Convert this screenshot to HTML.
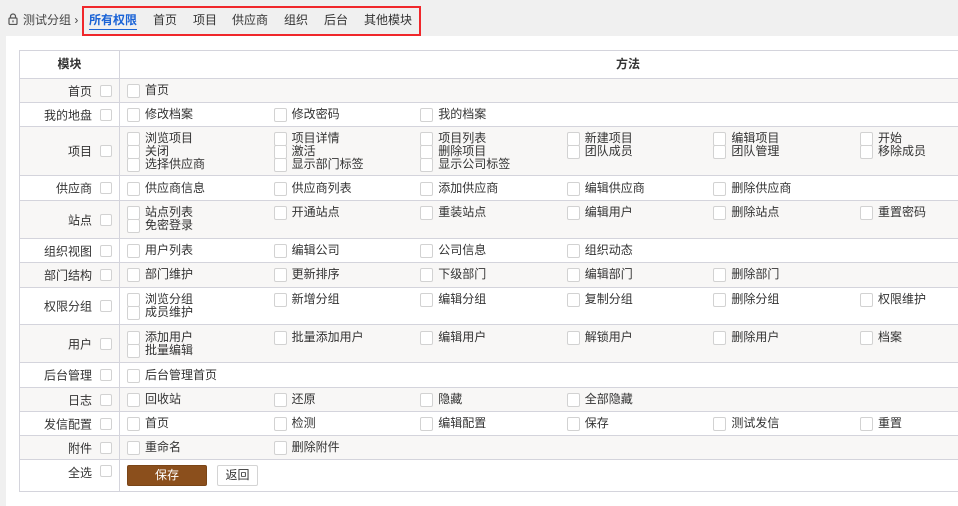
<!DOCTYPE html>
<html><head><meta charset="utf-8"><style>
*{box-sizing:border-box;margin:0;padding:0}
body{width:958px;height:499px;overflow:hidden;background:#f0f0f0;font-family:"Liberation Sans","Noto Sans CJK SC",sans-serif;font-size:12px;color:#333;position:relative}
.top{position:absolute;left:0;top:0;height:36px;width:958px}
.lock{position:absolute;left:8px;top:13px}
.crumb{position:absolute;left:23px;top:11px;font-size:12px;color:#444}
.redbox{position:absolute;left:82px;top:6px;width:339px;height:30px;border:2px solid #f0272b}
.nav{position:absolute;top:11px;font-size:12px;color:#333}
.nav.act{color:#1a63d6;font-weight:bold;border-bottom:1px solid #1a63d6;padding-bottom:1px}
.panel{position:absolute;left:6px;top:36px;width:960px;height:470px;background:#fff}
.tbl{position:absolute;left:19px;top:50px;width:1117px;border-left:1px solid #d4d4dc;border-top:1px solid #d4d4dc}
.row{position:relative;border-bottom:1px solid #d4d4dc;display:flex}
.row.alt{background:#f8f7f6}
.lc{width:100px;border-right:1px solid #d4d4dc;position:relative;flex:none}
.lc span{position:absolute;right:27px;top:50%;transform:translateY(-50%);white-space:nowrap}
.lc i{position:absolute;left:80px;top:50%;transform:translateY(-50%);width:12px;height:12px;border:1px solid #d2d2d2;border-radius:2px;background:#fff}
.rc{flex:1;padding-left:7px;display:flex;flex-wrap:wrap;align-content:flex-start}
.it{width:146.6px;height:13px;line-height:13px;white-space:nowrap;position:relative;padding-left:18px;flex:none}
.it::before{content:"";position:absolute;left:0;top:0;width:11px;height:12px;border:1px solid #d2d2d2;border-radius:2px;background:#fff}
.hd{font-weight:bold;height:28px;line-height:27px}
.btn{position:absolute;top:465px;height:21px;line-height:19px;text-align:center;border-radius:2px}
</style></head><body>
<div class="top">
<svg class="lock" width="10" height="12" viewBox="0 0 10 12"><path d="M2.5 5V3.5a2.5 2.5 0 0 1 5 0V5" fill="none" stroke="#555" stroke-width="1.2"/><rect x="1" y="5" width="8" height="6.5" rx="1" fill="none" stroke="#555" stroke-width="1.2"/><rect x="4.4" y="7.3" width="1.2" height="2" fill="#555"/></svg>
<div class="crumb">测试分组 ›</div>
<div class="redbox"></div>
<div class="nav act" style="left:89px">所有权限</div>
<div class="nav" style="left:153px">首页</div>
<div class="nav" style="left:193px">项目</div>
<div class="nav" style="left:232px">供应商</div>
<div class="nav" style="left:284px">组织</div>
<div class="nav" style="left:324px">后台</div>
<div class="nav" style="left:364px">其他模块</div>
</div>
<div class="panel"></div>
<div class="tbl">
<div class="row hd"><div class="lc" style="text-align:center">模块</div><div class="rc" style="display:block;text-align:center;padding-left:0">方法</div></div>
<div class="row alt" style="height:24px"><div class="lc"><span>首页</span><i></i></div><div class="rc" style="padding-top:5px"><div class="it">首页</div></div></div>
<div class="row" style="height:24px"><div class="lc"><span>我的地盘</span><i></i></div><div class="rc" style="padding-top:5px"><div class="it">修改档案</div><div class="it">修改密码</div><div class="it">我的档案</div></div></div>
<div class="row alt" style="height:49px"><div class="lc"><span>项目</span><i></i></div><div class="rc" style="padding-top:5px"><div class="it">浏览项目</div><div class="it">项目详情</div><div class="it">项目列表</div><div class="it">新建项目</div><div class="it">编辑项目</div><div class="it">开始</div><div class="it">关闭</div><div class="it">激活</div><div class="it">删除项目</div><div class="it">团队成员</div><div class="it">团队管理</div><div class="it">移除成员</div><div class="it">选择供应商</div><div class="it">显示部门标签</div><div class="it">显示公司标签</div></div></div>
<div class="row" style="height:25px"><div class="lc"><span>供应商</span><i></i></div><div class="rc" style="padding-top:6px"><div class="it">供应商信息</div><div class="it">供应商列表</div><div class="it">添加供应商</div><div class="it">编辑供应商</div><div class="it">删除供应商</div></div></div>
<div class="row alt" style="height:38px"><div class="lc"><span>站点</span><i></i></div><div class="rc" style="padding-top:5px"><div class="it">站点列表</div><div class="it">开通站点</div><div class="it">重装站点</div><div class="it">编辑用户</div><div class="it">删除站点</div><div class="it">重置密码</div><div class="it">免密登录</div></div></div>
<div class="row" style="height:24px"><div class="lc"><span>组织视图</span><i></i></div><div class="rc" style="padding-top:5px"><div class="it">用户列表</div><div class="it">编辑公司</div><div class="it">公司信息</div><div class="it">组织动态</div></div></div>
<div class="row alt" style="height:25px"><div class="lc"><span>部门结构</span><i></i></div><div class="rc" style="padding-top:5px"><div class="it">部门维护</div><div class="it">更新排序</div><div class="it">下级部门</div><div class="it">编辑部门</div><div class="it">删除部门</div></div></div>
<div class="row" style="height:37px"><div class="lc"><span>权限分组</span><i></i></div><div class="rc" style="padding-top:5px"><div class="it">浏览分组</div><div class="it">新增分组</div><div class="it">编辑分组</div><div class="it">复制分组</div><div class="it">删除分组</div><div class="it">权限维护</div><div class="it">成员维护</div></div></div>
<div class="row alt" style="height:38px"><div class="lc"><span>用户</span><i></i></div><div class="rc" style="padding-top:6px"><div class="it">添加用户</div><div class="it">批量添加用户</div><div class="it">编辑用户</div><div class="it">解锁用户</div><div class="it">删除用户</div><div class="it">档案</div><div class="it">批量编辑</div></div></div>
<div class="row" style="height:25px"><div class="lc"><span>后台管理</span><i></i></div><div class="rc" style="padding-top:6px"><div class="it">后台管理首页</div></div></div>
<div class="row alt" style="height:24px"><div class="lc"><span>日志</span><i></i></div><div class="rc" style="padding-top:5px"><div class="it">回收站</div><div class="it">还原</div><div class="it">隐藏</div><div class="it">全部隐藏</div></div></div>
<div class="row" style="height:24px"><div class="lc"><span>发信配置</span><i></i></div><div class="rc" style="padding-top:5px"><div class="it">首页</div><div class="it">检测</div><div class="it">编辑配置</div><div class="it">保存</div><div class="it">测试发信</div><div class="it">重置</div></div></div>
<div class="row alt" style="height:24px"><div class="lc"><span>附件</span><i></i></div><div class="rc" style="padding-top:5px"><div class="it">重命名</div><div class="it">删除附件</div></div></div>
<div class="row" style="height:32px"><div class="lc"><span style="top:4px;transform:none">全选</span><i style="top:5px;transform:none"></i></div><div class="rc"></div></div>
</div>
<div class="btn" style="left:127px;width:80px;background:#8b4f1c;color:#fff;border:1px solid #7a4517">保存</div>
<div class="btn" style="left:217px;width:41px;background:#fff;border:1px solid #d4d4d4;color:#333">返回</div>
</body></html>
